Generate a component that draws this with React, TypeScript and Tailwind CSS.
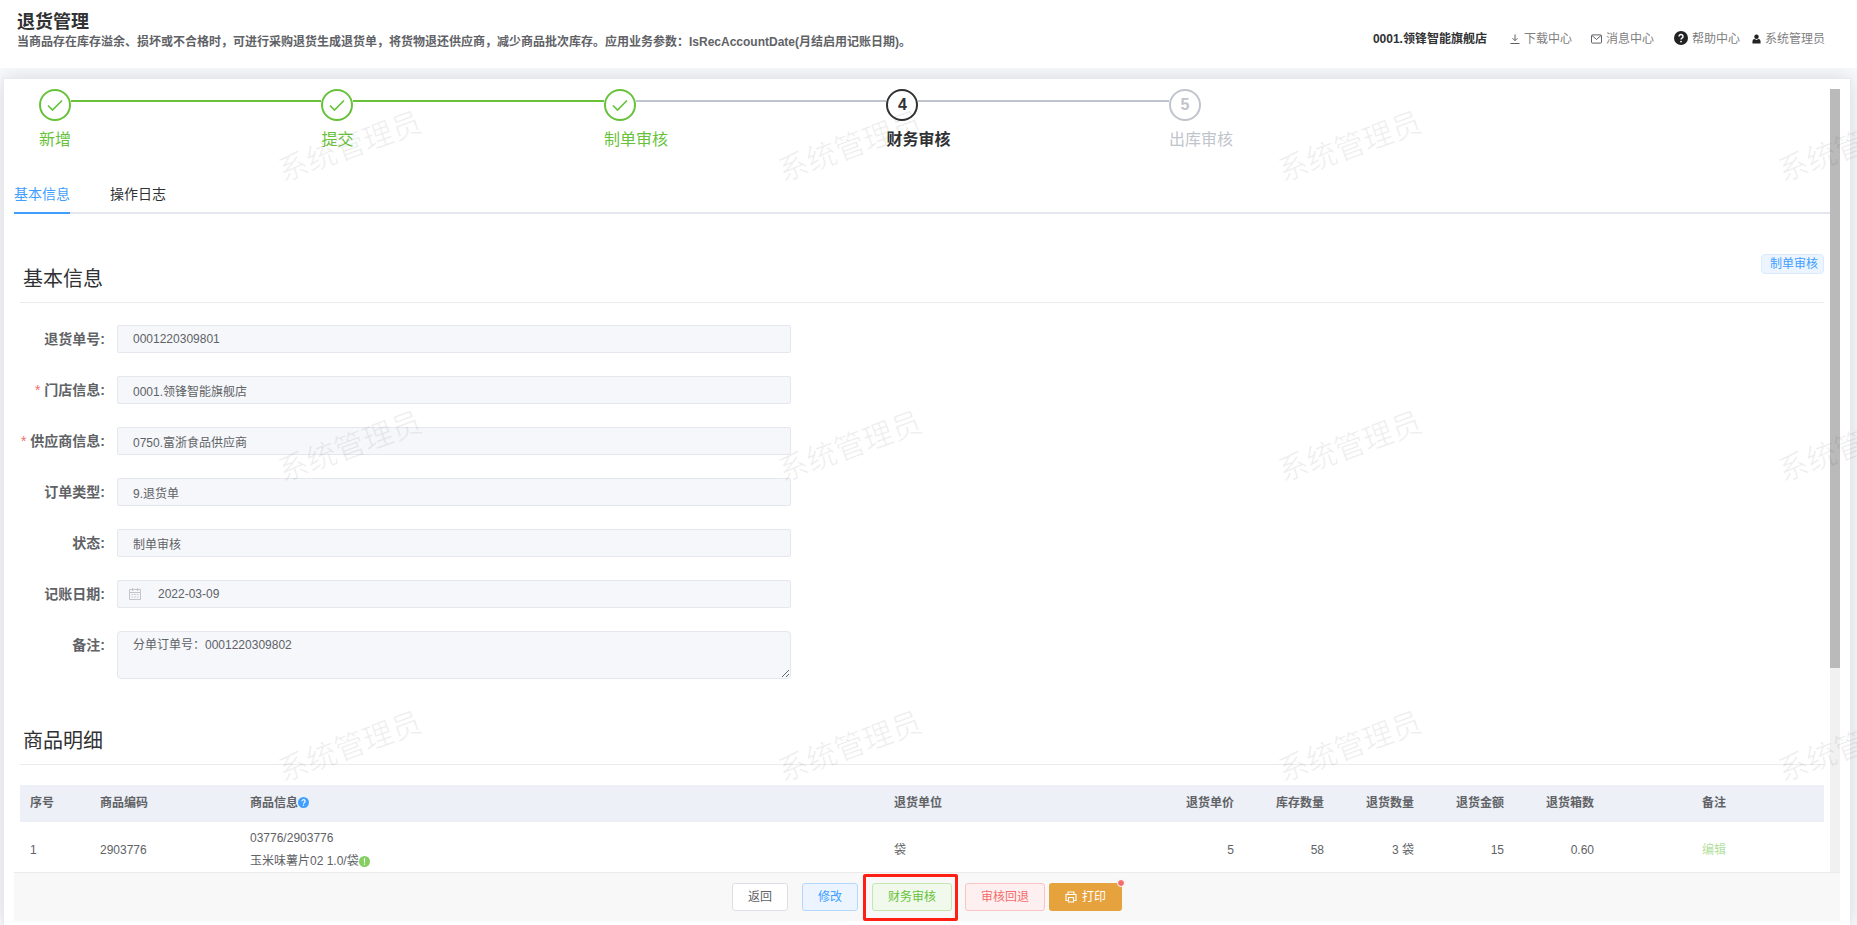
import type { ReactNode } from 'react';

const steps = [
  { title: '新增', status: 'done' },
  { title: '提交', status: 'done' },
  { title: '制单审核', status: 'done' },
  { title: '财务审核', status: 'current' },
  { title: '出库审核', status: 'wait' },
];

const stepColors: Record<string, string> = {
  done: 'text-[#67c23a] border-[#67c23a]',
  current: 'text-[#303133] border-[#303133]',
  wait: 'text-[#c0c4cc] border-[#c0c4cc]',
};

const fields = [
  { id: 'orderNo', label: '退货单号', value: '0001220309801' },
  { id: 'store', label: '门店信息', value: '0001.领锋智能旗舰店', required: true },
  { id: 'supplier', label: '供应商信息', value: '0750.富浙食品供应商', required: true },
  { id: 'orderType', label: '订单类型', value: '9.退货单' },
  { id: 'status', label: '状态', value: '制单审核' },
  { id: 'accountDate', label: '记账日期', value: '2022-03-09', date: true },
];

const WATERMARK = '系统管理员';

function CalendarIcon() {
  return (
    <svg viewBox="0 0 12 12" className="h-3 w-3" fill="none" stroke="currentColor">
      <path d="M.5 1.5h11v10H.5zM.5 4.5h11M3.5 0v3M8.5 0v3" />
      <path d="M2.5 6.5h7M2.5 9h7" strokeDasharray="1.6 1.1" />
    </svg>
  );
}

function QuestionIcon({ className }: { className: string }) {
  return (
    <svg viewBox="0 0 14 14" className={className}>
      <circle cx="7" cy="7" r="7" fill="currentColor" />
      <path d="M5 5.5a2 2 0 1 1 3 1.7c-.7.4-1 .7-1 1.4" fill="none" stroke="#fff" strokeWidth="1.5" />
      <circle cx="7" cy="10.6" r=".9" fill="#fff" />
    </svg>
  );
}

function Header() {
  return (
    <header className="flex h-[68px] shrink-0 justify-between bg-white pl-[17px] pr-8">
      <div className="pt-[11px]">
        <h1 className="text-lg font-bold leading-[22px] text-[#303133]">退货管理</h1>
        <p className="text-xs font-bold leading-[18px] text-[#606266]">
          当商品存在库存溢余、损坏或不合格时，可进行采购退货生成退货单，将货物退还供应商，减少商品批次库存。应用业务参数：IsRecAccountDate(月结启用记账日期)。
        </p>
      </div>
      <nav className="flex h-[77px] items-center text-xs text-[#808080]">
        <span className="mr-[23px] font-bold text-[#303133]">0001.领锋智能旗舰店</span>
        <a href="#download" className="mr-[19px] flex items-center gap-1">
          <svg viewBox="0 0 10 10" className="h-[10px] w-[10px]" fill="none" stroke="#606266">
            <path d="M5 .5v6M2.5 4.2 5 6.7l2.5-2.5M.5 9.5h9" />
          </svg>
          下载中心
        </a>
        <a href="#message" className="mr-5 flex items-center gap-1">
          <svg viewBox="0 0 11 10" className="h-[10px] w-[11px]" fill="none" stroke="#606266">
            <rect x=".5" y=".9" width="10" height="8.2" rx="1" />
            <path d="m1 1.5 4.5 4 4.5-4" />
          </svg>
          消息中心
        </a>
        <a href="#help" className="mr-3 flex items-center gap-1">
          <QuestionIcon className="mb-[2px] h-[14px] w-[14px] text-[#222]" />
          帮助中心
        </a>
        <a href="#user" className="flex items-center gap-1">
          <svg viewBox="0 0 10 10" className="h-[10px] w-[9px]" fill="#222">
            <circle cx="5" cy="2.5" r="2.5" />
            <path d="M.5 10V7.500A2.5 2.5 0 0 1 3 5l2 1 2-1a2.5 2.5 0 0 1 2.5 2.500V10z" />
          </svg>
          系统管理员
        </a>
      </nav>
    </header>
  );
}

function Steps() {
  return (
    <ol className="ml-[25px] flex w-7/9 text-base">
      {steps.map((step, i) => (
        <li key={step.title} className={`flex-1 ${stepColors[step.status]}`}>
          <div className="flex">
            <div className="flex h-8 w-8 shrink-0 items-center justify-center rounded-full border-2 border-inherit font-bold">
              {step.status === 'done' ? (
                <svg viewBox="0 0 16 16" className="h-4 w-4" fill="none" stroke="currentColor" strokeWidth="1.7">
                  <path d="m1 8.5 4.500 4.500L15 3.500" />
                </svg>
              ) : (
                i + 1
              )}
            </div>
            {i < steps.length - 1 && (
              <div
                className={`mt-[11px] h-[2px] flex-1 ${i < 2 ? 'bg-[#67c23a]' : 'bg-[#c0c4cc]'}`}
              />
            )}
          </div>
          <div className={`leading-[38px] ${step.status === 'current' ? 'font-bold' : ''}`}>{step.title}</div>
        </li>
      ))}
    </ol>
  );
}

function SectionTitle({ children }: { children: ReactNode }) {
  return (
    <h2 className="border-b border-[#ebebeb] pb-2 pl-[3px] text-xl leading-[30px] text-[#303133]">
      {children}
    </h2>
  );
}

function InfoForm() {
  return (
    <form className="mt-[22px] flex w-[771px] max-w-full flex-col gap-[23px]">
      {fields.map((f) => (
        <div key={f.id} className="flex h-7 items-center">
          <label htmlFor={f.id} className="w-[97px] shrink-0 pr-3 text-right text-sm font-bold text-[#606266]">
            {f.required && <span className="mr-1 font-normal text-[#f56c6c]">*</span>}
            {f.label}:
          </label>
          <div className="relative flex-1">
            {f.date && (
              <span className="absolute left-3 top-2 text-[#c0c4cc]">
                <CalendarIcon />
              </span>
            )}
            <input
              id={f.id}
              readOnly
              defaultValue={f.value}
              className={`block h-7 w-full rounded-xs border border-[#e4e7ed] bg-[#f5f7fa] pr-[15px] text-xs text-[#606266] outline-none ${f.date ? 'pl-10' : 'pl-[15px]'}`}
            />
          </div>
        </div>
      ))}
      <div className="flex">
        <label htmlFor="remark" className="w-[97px] shrink-0 pr-3 text-right text-sm font-bold leading-7 text-[#606266]">
          备注:
        </label>
        <textarea
          id="remark"
          readOnly
          defaultValue="分单订单号：0001220309802"
          className="block h-12 flex-1 resize-y rounded border border-[#e4e7ed] bg-[#f5f7fa] px-[15px] py-1 text-xs leading-[18px] text-[#606266] outline-none"
        />
      </div>
    </form>
  );
}

function GoodsTable() {
  return (
    <table className="mt-5 w-full table-fixed text-left text-xs text-[#606266]">
      <colgroup>
        <col className="w-[70px]" />
        <col className="w-[150px]" />
        <col />
        <col className="w-[270px]" />
        <col className="w-[90px]" />
        <col className="w-[90px]" />
        <col className="w-[90px]" />
        <col className="w-[90px]" />
        <col className="w-[90px]" />
        <col className="w-[220px]" />
      </colgroup>
      <thead>
        <tr className="h-9 border-b border-[#ebeef5] bg-[#edf0f6]">
          <th className="px-[10px]">序号</th>
          <th className="px-[10px]">商品编码</th>
          <th className="px-[10px]">
            <span className="flex items-center">
              商品信息
              <QuestionIcon className="h-[11px] w-[11px] text-[#409eff]" />
            </span>
          </th>
          <th className="px-[10px]">退货单位</th>
          <th className="px-[10px] text-right">退货单价</th>
          <th className="px-[10px] text-right">库存数量</th>
          <th className="px-[10px] text-right">退货数量</th>
          <th className="px-[10px] text-right">退货金额</th>
          <th className="px-[10px] text-right">退货箱数</th>
          <th className="px-[10px] text-center">备注</th>
        </tr>
      </thead>
      <tbody>
        <tr className="border-b border-[#ebeef5]">
          <td className="px-[10px]">1</td>
          <td className="px-[10px]">2903776</td>
          <td className="px-[10px] py-[5px] leading-[23px]">
            <div>03776/2903776</div>
            <div className="flex items-center">
              玉米味薯片02 1.0/袋
              <svg viewBox="0 0 12 12" className="h-[11px] w-[11px]">
                <circle cx="6" cy="6" r="6" fill="#85ce61" />
                <path d="M6 2.5v4.5M6 8.2v1.4" stroke="#fff" strokeWidth="1.3" />
              </svg>
            </div>
          </td>
          <td className="px-[10px]">袋</td>
          <td className="px-[10px] text-right">5</td>
          <td className="px-[10px] text-right">58</td>
          <td className="px-[10px] text-right">3 袋</td>
          <td className="px-[10px] text-right">15</td>
          <td className="px-[10px] text-right">0.60</td>
          <td className="px-[10px] text-center">
            <button type="button" disabled className="text-[#b3e19d]">编辑</button>
          </td>
        </tr>
      </tbody>
    </table>
  );
}

function ActionBar() {
  return (
    <footer className="flex h-[49px] shrink-0 items-center justify-center border-t border-[#ebebeb] bg-[#f8f8f8] text-xs">
      <button type="button" className="mr-[14px] h-7 rounded-[3px] border border-[#dcdfe6] bg-white px-[15px] text-[#606266]">
        返回
      </button>
      <button type="button" className="h-7 rounded-[3px] border border-[#b3d8ff] bg-[#ecf5ff] px-[15px] text-[#409eff]">
        修改
      </button>
      <div className="ml-[5px] mr-[7px] flex h-[47px] items-center rounded-xs border-3 border-[#ff2015] pl-[6px] pr-[3px]">
        <button type="button" className="h-7 rounded-[3px] border border-[#c2e7b0] bg-[#f0f9eb] px-[15px] text-[#67c23a]">
          财务审核
        </button>
      </div>
      <button type="button" className="mr-1 h-7 rounded-[3px] border border-[#fbc4c4] bg-[#fef0f0] px-[15px] text-[#f56c6c]">
        审核回退
      </button>
      <button type="button" className="relative flex h-7 items-center gap-[5px] rounded-[3px] bg-[#e6a23c] px-4 text-white">
        <svg viewBox="0 0 12 12" className="h-3 w-3" fill="none" stroke="currentColor" strokeWidth="1.1">
          <path d="M3 3.5V1h6v2.5M3 9.5H1v-6h10v6H9M3.5 6.5h5V11h-5z" />
        </svg>
        打印
        <span className="absolute -right-[3px] -top-1 h-2 w-2 rounded-full border border-white bg-[#f56c6c]" />
      </button>
    </footer>
  );
}

function Watermark() {
  return (
    <div
      aria-hidden="true"
      className="pointer-events-none absolute inset-x-0 -top-[3px] bottom-0 grid grid-cols-[repeat(4,500px)] grid-rows-[repeat(3,300px)] overflow-hidden pl-[100px]"
    >
      {Array.from({ length: 12 }, (_, i) => (
        <div key={i} className="flex items-center justify-center">
          <span className="-rotate-20 whitespace-nowrap text-3xl text-black/6">{WATERMARK}</span>
        </div>
      ))}
    </div>
  );
}

export default function App() {
  return (
    <div className="relative flex h-screen flex-col overflow-hidden bg-[#f9fafb] font-['Liberation_Sans','Noto_Sans_CJK_SC',sans-serif]">
      <Header />
      <main className="flex min-h-0 flex-1 overflow-hidden pl-[3px] pr-[6px] pt-[10px]">
        <div className="flex min-h-0 flex-1 flex-col border border-b-0 border-[#e6eaf0] bg-white px-[10px] pb-1 pt-[10px] shadow-[0_0_20px_rgba(0,0,0,0.14)]">
          <div className="flex min-h-0 flex-1">
            <div className="min-w-0 flex-1 overflow-hidden">
              <Steps />
              <div role="tablist" className="mt-[15px] flex h-10 gap-10 border-b-2 border-[#e4e7ed] text-sm text-[#303133]">
                <button role="tab" aria-selected="true" type="button" className="-mb-[2px] border-b-2 border-[#409eff] pt-[2px] text-[#409eff]">
                  基本信息
                </button>
                <button role="tab" aria-selected="false" type="button" className="pt-[2px]">
                  操作日志
                </button>
              </div>
              <div className="px-[6px] pt-10">
                <div className="flex justify-end">
                  <span className="h-5 rounded border border-[#d9ecff] bg-[#ecf5ff] pl-2 pr-[5px] text-xs leading-[18px] text-[#409eff]">
                    制单审核
                  </span>
                </div>
                <div className="-mt-[10px]">
                  <SectionTitle>基本信息</SectionTitle>
                </div>
                <InfoForm />
                <div className="mt-[47px]">
                  <SectionTitle>商品明细</SectionTitle>
                </div>
                <GoodsTable />
              </div>
            </div>
            <div className="w-[10px] shrink-0 bg-[#f1f1f1]">
              <div className="h-[74%] bg-[#bababa]" />
            </div>
          </div>
          <ActionBar />
        </div>
      </main>
      <Watermark />
    </div>
  );
}
